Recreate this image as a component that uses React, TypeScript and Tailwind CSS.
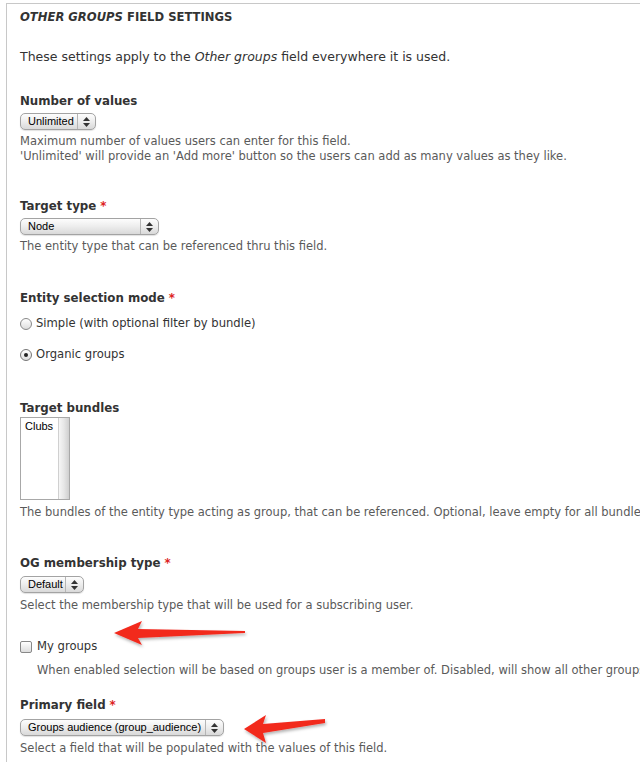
import React from 'react'

const body = { fontFamily: '"DejaVu Sans", Verdana, sans-serif' }

const Arrows = () => (
  <span className="inline-flex flex-col items-center justify-center w-[18px] h-full border-l border-[#b5b5b5]">
    <svg width="7" height="10" viewBox="0 0 7 10">
      <polygon points="3.5,0 7,4 0,4" fill="#333" />
      <polygon points="0,6 7,6 3.5,10" fill="#333" />
    </svg>
  </span>
)

const Select = ({ label, width }: { label: string; width: string }) => (
  <div
    className={`${width} h-[17px] flex items-center justify-between rounded-[5px] border border-[#a3a3a3] bg-gradient-to-b from-[#fdfdfd] via-[#ededed] to-[#d9d9d9] shadow-[0_1px_1px_rgba(0,0,0,0.12)] text-[11px] text-black`}
    style={{ fontFamily: '"Liberation Sans", Arial, sans-serif' }}
  >
    <span className="pl-[7px] leading-[15px]">{label}</span>
    <Arrows />
  </div>
)

const Heading = ({ children, req }: { children: React.ReactNode; req?: boolean }) => (
  <div className="h-[16px] leading-[16px] text-[11.8px] font-bold text-[#333]">
    {children}
    {req && <span className="text-[#d22] ml-[4px]">*</span>}
  </div>
)

const Desc = ({ children, className = '' }: { children: React.ReactNode; className?: string }) => (
  <div className={`text-[11.5px] leading-[15px] text-[#5a5a5a] whitespace-nowrap ${className}`}>{children}</div>
)

export default function App() {
  return (
    <div className="w-[640px] h-[762px] bg-white relative overflow-hidden pt-[3px] pl-[6px]" style={body}>
      <div className="h-full border-l border-t border-[#c8c8c8] pl-[13px]">
        <div className="mt-[5px] h-[16px] leading-[16px] text-[11.6px] font-bold text-[#333] uppercase">
          <em>Other groups</em> field settings
        </div>

        <div className="mt-[24px] h-[16px] leading-[16px] text-[12.5px] text-[#333]">
          These settings apply to the <em>Other groups</em> field everywhere it is used.
        </div>

        <div className="mt-[28px]">
          <Heading>Number of values</Heading>
          <div className="mt-[4px]">
            <Select label="Unlimited" width="w-[76px]" />
          </div>
          <Desc className="mt-[4px]">
            <div>Maximum number of values users can enter for this field.</div>
            <div>'Unlimited' will provide an 'Add more' button so the users can add as many values as they like.</div>
          </Desc>
        </div>

        <div className="mt-[34px]">
          <Heading req>Target type</Heading>
          <div className="mt-[4px]">
            <Select label="Node" width="w-[139px]" />
          </div>
          <Desc className="mt-[4px]">The entity type that can be referenced thru this field.</Desc>
        </div>

        <div className="mt-[36px]">
          <Heading req>Entity selection mode</Heading>
          <div className="mt-[10px] flex items-center h-[16px] text-[11.6px] text-[#333]">
            <span className="w-[12px] h-[12px] rounded-full border border-[#888] bg-gradient-to-b from-white to-[#ddd] mr-[4px]" />
            Simple (with optional filter by bundle)
          </div>
          <div className="mt-[15px] flex items-center h-[16px] text-[11.6px] text-[#333]">
            <span className="w-[12px] h-[12px] rounded-full border border-[#777] bg-gradient-to-b from-white to-[#ddd] mr-[4px] flex items-center justify-center">
              <span className="w-[4px] h-[4px] rounded-full bg-[#222]" />
            </span>
            Organic groups
          </div>
        </div>

        <div className="mt-[37px]">
          <Heading>Target bundles</Heading>
          <div className="mt-[1px] w-[50px] h-[83px] border border-[#a8a8a8] flex">
            <div
              className="flex-1 pl-[4px] pt-[1px] text-[11px] leading-[14px] text-black"
              style={{ fontFamily: '"Liberation Sans", Arial, sans-serif' }}
            >
              Clubs
            </div>
            <div className="w-[11px] h-full border-l border-[#d0d0d0] bg-gradient-to-r from-[#f6f6f6] via-[#e6e6e6] to-[#cfcfcf]" />
          </div>
          <Desc className="mt-[5px]">
            The bundles of the entity type acting as group, that can be referenced. Optional, leave empty for all bundles.
          </Desc>
        </div>

        <div className="mt-[35px]">
          <Heading req>OG membership type</Heading>
          <div className="mt-[5px]">
            <Select label="Default" width="w-[64px]" />
          </div>
          <Desc className="mt-[5px]">Select the membership type that will be used for a subscribing user.</Desc>
        </div>

        <div className="mt-[26px] flex items-center h-[16px] text-[11.6px] text-[#333]">
          <span className="w-[12px] h-[12px] rounded-[2px] border border-[#888] bg-gradient-to-b from-white to-[#ddd] mr-[5px]" />
          My groups
        </div>
        <Desc className="mt-[8px] pl-[17px]">
          When enabled selection will be based on groups user is a member of. Disabled, will show all other groups.
        </Desc>

        <div className="mt-[19px]">
          <Heading req>Primary field</Heading>
          <div className="mt-[6px]">
            <Select label="Groups audience (group_audience)" width="w-[204px]" />
          </div>
          <Desc className="mt-[5px]">Select a field that will be populated with the values of this field.</Desc>
        </div>
      </div>

      <svg className="absolute left-[100px] top-[612px]" width="160" height="40" viewBox="0 0 160 40">
        <defs>
          <filter id="sh1" x="-10%" y="-30%" width="120%" height="160%">
            <feDropShadow dx="1" dy="2" stdDeviation="1.5" floodColor="#000" floodOpacity="0.3" />
          </filter>
        </defs>
        <polygon
          points="14,21 42,9 38,17 145,19 145,21 38,26 42,33"
          fill="#f2291f"
          filter="url(#sh1)"
        />
      </svg>

      <svg className="absolute left-[230px] top-[700px]" width="110" height="50" viewBox="0 0 110 50">
        <defs>
          <filter id="sh2" x="-10%" y="-30%" width="120%" height="160%">
            <feDropShadow dx="1" dy="2" stdDeviation="1.5" floodColor="#000" floodOpacity="0.3" />
          </filter>
        </defs>
        <polygon
          points="14,29 36,15 33,24 95,19 95,23 33,33 36,43"
          fill="#f2291f"
          filter="url(#sh2)"
        />
      </svg>
    </div>
  )
}
